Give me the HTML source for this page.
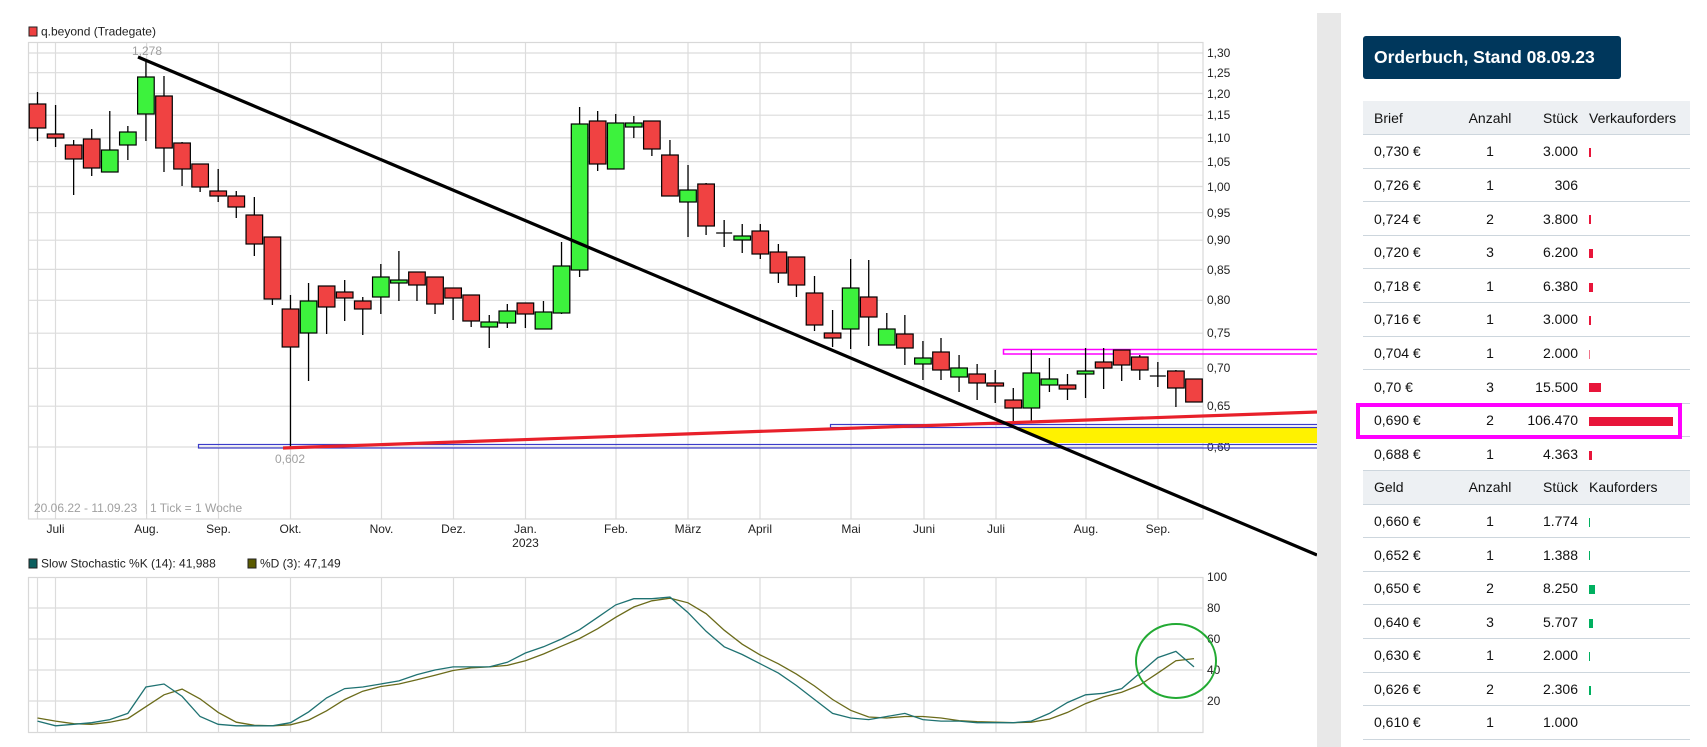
<!DOCTYPE html>
<html><head><meta charset="utf-8">
<style>
html,body{margin:0;padding:0;background:#fff;width:1707px;height:747px;overflow:hidden;font-family:"Liberation Sans",Arial,sans-serif;}
#chart{position:absolute;left:0;top:0;}
#gray{position:absolute;left:1317px;top:13px;width:24px;height:734px;background:#e8e8e8;}
#hdr{position:absolute;left:1363px;top:36px;width:258px;height:43px;background:#00375c;border-radius:3px;color:#fff;font-weight:bold;font-size:17.5px;line-height:43px;padding-left:11px;box-sizing:border-box;white-space:nowrap;}
table{position:absolute;left:1363px;top:101px;width:327px;border-collapse:collapse;font-size:14px;color:#111;}
td{height:33.6px;padding:0;border-bottom:1.5px solid #cdd6dd;box-sizing:border-box;white-space:nowrap;}
tr.h td{background:#edf0f3;}
td.c1{padding-left:11px;width:96px;}
td.c2{text-align:center;width:62px;}
td.c3{text-align:right;width:57px;padding-right:0;}
td.c4{padding-left:11px;}
.bar{display:inline-block;height:9px;vertical-align:middle;}
.r{background:#e8153a;}
.g{background:#00b060;}
#mag{position:absolute;left:1356px;top:403px;width:326px;height:36px;border:4px solid #ff00ff;box-sizing:border-box;}
</style></head><body>
<svg id="chart" width="1317" height="747" xmlns="http://www.w3.org/2000/svg" font-family="Liberation Sans, Arial, sans-serif" font-size="12">
<g id="grid" stroke="#dcdcdc" stroke-width="1.2" fill="none"></g>
<rect x="28.5" y="42.5" width="1174.5" height="476.5" fill="none" stroke="#d8d8d8" stroke-width="1.2"/>
<rect x="28.5" y="577.5" width="1174.5" height="155" fill="none" stroke="#d8d8d8" stroke-width="1.2"/>
<g id="sgrid" stroke="#dcdcdc" stroke-width="1.2"></g>
<!-- legend -->
<rect x="29" y="27" width="8" height="9" fill="#ef4040" stroke="#222" stroke-width="1"/>
<text x="41" y="35.5" fill="#222">q.beyond (Tradegate)</text>
<!-- y labels -->
<g fill="#222">
<text x="1207" y="57">1,30</text><text x="1207" y="77">1,25</text><text x="1207" y="98">1,20</text>
<text x="1207" y="119">1,15</text><text x="1207" y="142">1,10</text><text x="1207" y="166">1,05</text>
<text x="1207" y="191">1,00</text><text x="1207" y="217">0,95</text><text x="1207" y="244">0,90</text>
<text x="1207" y="274">0,85</text><text x="1207" y="304">0,80</text><text x="1207" y="337">0,75</text>
<text x="1207" y="372">0,70</text><text x="1207" y="410">0,65</text><text x="1207" y="451">0,60</text>
</g>
<g fill="#222" text-anchor="middle">
<text x="55.5" y="533">Juli</text><text x="146.6" y="533">Aug.</text><text x="218.5" y="533">Sep.</text>
<text x="290.5" y="533">Okt.</text><text x="381.5" y="533">Nov.</text><text x="453.5" y="533">Dez.</text>
<text x="525.5" y="533">Jan.</text><text x="525.5" y="547">2023</text><text x="616" y="533">Feb.</text>
<text x="688" y="533">März</text><text x="760" y="533">April</text><text x="851" y="533">Mai</text>
<text x="924" y="533">Juni</text><text x="996" y="533">Juli</text><text x="1086" y="533">Aug.</text>
<text x="1158" y="533">Sep.</text>
</g>
<text x="147" y="55" fill="#a0a0a0" text-anchor="middle">1,278</text>
<text x="290" y="463" fill="#a0a0a0" text-anchor="middle">0,602</text>
<text x="34" y="512" fill="#a0a0a0">20.06.22 - 11.09.23</text>
<line x1="146.5" y1="500" x2="146.5" y2="514" stroke="#ccc"/>
<text x="150" y="512" fill="#a0a0a0">1 Tick = 1 Woche</text>
<!-- shapes -->
<polygon points="1014,427 1317,427 1317,443 1052,443" fill="#fff200"/>
<rect x="198.5" y="444.5" width="1120" height="3.5" fill="none" stroke="#3b3bc8" stroke-width="1.2"/>
<rect x="830.5" y="424.5" width="490" height="3" fill="none" stroke="#3b3bc8" stroke-width="1.2"/>
<rect x="1003.5" y="349.5" width="320" height="4.5" fill="none" stroke="#ff00ff" stroke-width="1.5"/>
<g id="candles"></g>
<polyline points="283,448 1317,412" stroke="#e8202a" stroke-width="3.2" fill="none"/>
<line x1="138" y1="57" x2="1317" y2="555" stroke="#000" stroke-width="3.2"/>
<!-- stochastic -->
<rect x="29" y="559" width="8" height="9" fill="#0b5e5e" stroke="#222" stroke-width="1"/>
<text x="41" y="567.5" fill="#222">Slow Stochastic %K (14): 41,988</text>
<rect x="248" y="559" width="8" height="9" fill="#5b5b00" stroke="#222" stroke-width="1"/>
<text x="260" y="567.5" fill="#222">%D (3): 47,149</text>
<g fill="#222">
<text x="1207" y="534">&#8203;</text>
<text x="1207" y="581">100</text><text x="1207" y="612">80</text><text x="1207" y="643">60</text>
<text x="1207" y="674">40</text><text x="1207" y="705">20</text>
</g>
<polyline id="dl" fill="none" stroke="#6b6b1a" stroke-width="1.3"/>
<polyline id="kl" fill="none" stroke="#1f7272" stroke-width="1.3"/>
<ellipse cx="1176" cy="661" rx="40" ry="37" fill="none" stroke="#22aa33" stroke-width="2"/>
</svg>
<div id="gray"></div>
<div id="hdr">Orderbuch, Stand 08.09.23</div>
<table>
<tr class="h"><td class="c1">Brief</td><td class="c2">Anzahl</td><td class="c3">Stück</td><td class="c4">Verkauforders</td></tr>
<tr><td class="c1">0,730 €</td><td class="c2">1</td><td class="c3">3.000</td><td class="c4"><span class="bar r" style="width:2px"></span></td></tr>
<tr><td class="c1">0,726 €</td><td class="c2">1</td><td class="c3">306</td><td class="c4"></td></tr>
<tr><td class="c1">0,724 €</td><td class="c2">2</td><td class="c3">3.800</td><td class="c4"><span class="bar r" style="width:2px"></span></td></tr>
<tr><td class="c1">0,720 €</td><td class="c2">3</td><td class="c3">6.200</td><td class="c4"><span class="bar r" style="width:4px"></span></td></tr>
<tr><td class="c1">0,718 €</td><td class="c2">1</td><td class="c3">6.380</td><td class="c4"><span class="bar r" style="width:4px"></span></td></tr>
<tr><td class="c1">0,716 €</td><td class="c2">1</td><td class="c3">3.000</td><td class="c4"><span class="bar r" style="width:2px"></span></td></tr>
<tr><td class="c1">0,704 €</td><td class="c2">1</td><td class="c3">2.000</td><td class="c4"><span class="bar r" style="width:1px;opacity:.6"></span></td></tr>
<tr><td class="c1">0,70 €</td><td class="c2">3</td><td class="c3">15.500</td><td class="c4"><span class="bar r" style="width:12px"></span></td></tr>
<tr><td class="c1">0,690 €</td><td class="c2">2</td><td class="c3">106.470</td><td class="c4"><span class="bar r" style="width:84px"></span></td></tr>
<tr><td class="c1">0,688 €</td><td class="c2">1</td><td class="c3">4.363</td><td class="c4"><span class="bar r" style="width:3px"></span></td></tr>
<tr class="h"><td class="c1">Geld</td><td class="c2">Anzahl</td><td class="c3">Stück</td><td class="c4">Kauforders</td></tr>
<tr><td class="c1">0,660 €</td><td class="c2">1</td><td class="c3">1.774</td><td class="c4"><span class="bar g" style="width:1px"></span></td></tr>
<tr><td class="c1">0,652 €</td><td class="c2">1</td><td class="c3">1.388</td><td class="c4"><span class="bar g" style="width:1px"></span></td></tr>
<tr><td class="c1">0,650 €</td><td class="c2">2</td><td class="c3">8.250</td><td class="c4"><span class="bar g" style="width:6px"></span></td></tr>
<tr><td class="c1">0,640 €</td><td class="c2">3</td><td class="c3">5.707</td><td class="c4"><span class="bar g" style="width:4px"></span></td></tr>
<tr><td class="c1">0,630 €</td><td class="c2">1</td><td class="c3">2.000</td><td class="c4"><span class="bar g" style="width:1px"></span></td></tr>
<tr><td class="c1">0,626 €</td><td class="c2">2</td><td class="c3">2.306</td><td class="c4"><span class="bar g" style="width:2px"></span></td></tr>
<tr><td class="c1">0,610 €</td><td class="c2">1</td><td class="c3">1.000</td><td class="c4"></td></tr>
</table>
<div id="mag"></div>
<script>
var NS="http://www.w3.org/2000/svg";
function el(p,t,a){var e=document.createElementNS(NS,t);for(var k in a)e.setAttribute(k,a[k]);p.appendChild(e);return e;}
var grid=document.getElementById('grid');
[53,72.7,93.5,115.2,137.9,161.6,186.5,212.7,240.2,269.4,300.3,333.2,368.4,406.2,447].forEach(function(y){el(grid,'line',{x1:28.5,x2:1203,y1:y,y2:y});});
var vx=[37.5,55.5,146.6,218.5,290.5,381.5,453.5,525.5,616,688,760,851,924,996,1086,1158];
vx.forEach(function(x){el(grid,'line',{x1:x,x2:x,y1:42.5,y2:519});});
var sg=document.getElementById('sgrid');
[608,639,670,701].forEach(function(y){el(sg,'line',{x1:28.5,x2:1203,y1:y,y2:y});});
vx.forEach(function(x){el(sg,'line',{x1:x,x2:x,y1:577.5,y2:732.5});});
var C=[[104,128,92,141,0],[134,138,105,147,0],[145,159,140,195,0],[139,168,129,176,0],[150,172,111,172,1],[132,145,126,160,1],[77,114,59,141,1],[96,148,76,172,0],[143,169,142,186,0],[164,187,164,192,0],[191,196,169,202,0],[196,207,191,218,0],[215,244,197,256,0],[237,299,237,305,0],[309,347,295,448,0],[301,333,283,381,1],[286,307,286,334,0],[292,298,280,321,0],[301,309,297,335,0],[277,297,264,314,1],[280,283,251,301,1],[272,285,272,301,0],[277,304,277,314,0],[288,298,288,320,0],[295,321,295,327,0],[322,327,315,348,1],[311,323,304,328,1],[303,314,303,328,0],[312,329,301,329,1],[266,313,242,314,1],[124,270,107,277,1],[121,164,111,171,0],[123,169,114,169,1],[123,127,116,138,1],[121,149,121,156,0],[155,196,140,196,0],[190,202,165,237,1],[184,226,183,235,0],[233,233,220,247,2],[236,240,224,253,1],[231,254,224,259,0],[252,273,244,283,0],[257,285,257,297,0],[293,325,276,331,0],[333,338,310,347,0],[288,329,259,349,1],[297,317,260,346,0],[329,345,313,345,1],[334,348,315,365,0],[358,364,341,380,1],[352,370,338,380,0],[368,377,355,392,1],[374,383,364,400,0],[383,386,370,403,0],[400,408,388,422,0],[373,408,350,422,1],[379,385,358,392,1],[385,389,374,400,0],[371,374,348,398,1],[362,368,348,389,0],[350,365,350,381,0],[357,370,355,380,0],[376,376,362,387,2],[371,388,370,407,0],[379,402,379,402,0]];
var cg=document.getElementById('candles');
C.forEach(function(c,k){var x=37.5+18.07*k;
 el(cg,'line',{x1:x,x2:x,y1:c[2],y2:c[3],stroke:'#000','stroke-width':1.3});
 if(c[4]==2){el(cg,'line',{x1:x-8,x2:x+8,y1:c[0],y2:c[0],stroke:'#000','stroke-width':1.3});}
 else el(cg,'rect',{x:x-8.3,y:c[0],width:16.6,height:Math.max(c[1]-c[0],3),fill:c[4]?'#3df23d':'#f04242',stroke:'#000','stroke-width':1.2});
});
var K=[7,4,5,6,8,12,29,31,23,10,5,4,4,4,6,13,22,28,29,31,33,37,40,42,42,42,45,51,55,60,66,74,82,86,86,87,77,65,55,50,44,38,30,21,12,9,8,10,12,8,7,7,6,6,6,7,12,19,24,25,28,38,48,52,42];
var D=K.map(function(v,i){var a=K[Math.max(0,i-2)],b=K[Math.max(0,i-1)];return (a+b+v)/3;});
D[0]=9;D[1]=7;
function pts(A){return A.map(function(v,i){return (37.5+18.07*i).toFixed(1)+','+(732-v*1.55).toFixed(1);}).join(' ');}
document.getElementById('kl').setAttribute('points',pts(K));
document.getElementById('dl').setAttribute('points',pts(D));
</script>
</body></html>
